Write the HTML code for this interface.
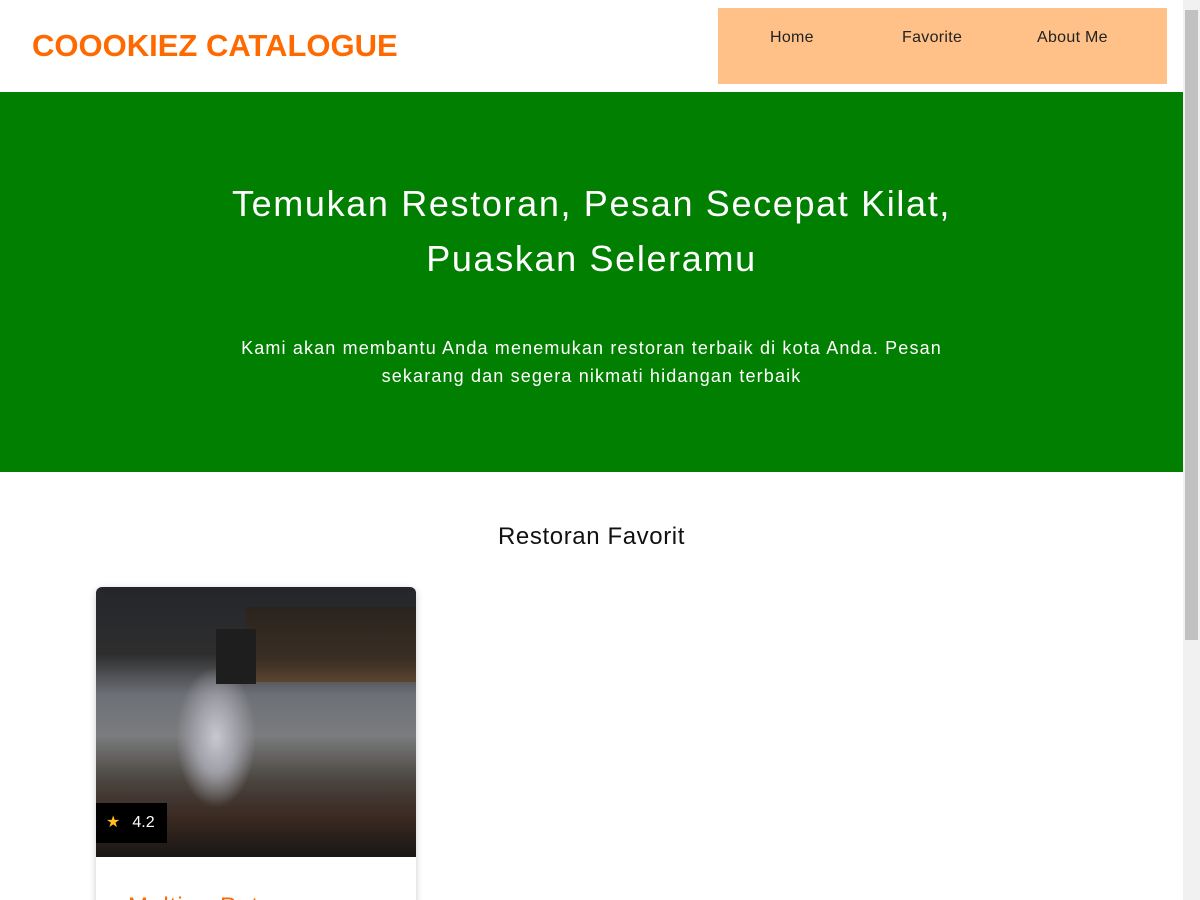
<!DOCTYPE html>
<html><head><meta charset="utf-8"><style>
*{margin:0;padding:0;box-sizing:border-box}
html,body{width:1200px;height:900px;overflow:hidden;background:#fff;font-family:"Liberation Sans",sans-serif}
.page{width:1183px;position:relative;height:900px}
.logo{position:absolute;left:32px;top:28px;color:#ff6a00;font-weight:bold;font-size:31px;letter-spacing:0px}
.nav{position:absolute;left:718px;top:8px;width:449px;height:76px;background:#ffc187}
.nav span{position:absolute;top:21px;font-size:16px;color:#222;letter-spacing:0.3px}
.hero{position:absolute;top:92px;left:0;width:1183px;height:380px;background:#007f00;color:#fff;text-align:center}
.hero h1{font-weight:normal;font-size:36px;line-height:55px;margin-top:84px;letter-spacing:1.65px}
.hero p{font-size:18px;line-height:28px;margin:48px auto 0;width:720px;letter-spacing:1.15px}
.sec{position:absolute;top:523px;width:1183px;text-align:center;font-size:24px;color:#111;letter-spacing:0.6px}
.card{position:absolute;left:96px;top:587px;width:320px;height:330px;border-radius:6px;overflow:hidden;box-shadow:0 2px 8px rgba(0,0,0,.2);background:#fff}
.img{height:270px;position:relative;background:
radial-gradient(ellipse 40px 70px at 120px 150px,#c8c8d0 0%,#a0a0a8 50%,transparent 100%),
linear-gradient(180deg,#24262a 0%,#2e2e2e 25%,#6d7076 40%,#7a7c7e 55%,#4a443e 72%,#3a2a22 85%,#1a1614 100%)}
.shelf{position:absolute;left:150px;top:20px;width:170px;height:75px;background:linear-gradient(180deg,#2a241e,#3a2e24 70%,#5a4430)}
.board{position:absolute;left:120px;top:42px;width:40px;height:55px;background:#1e1e1e}
.rate{position:absolute;left:0;top:216px;width:71px;height:40px;background:#000;color:#fff;font-size:16px;line-height:40px;padding-left:10px}
.rate b{color:#ffc020;font-weight:normal;margin-right:12px}
.title{position:absolute;left:32px;top:306px;color:#ff6a00;font-size:24px;letter-spacing:1px}
.sb{position:absolute;left:1183px;top:0;width:17px;height:900px;background:#f1f1f1}
.th{position:absolute;left:2px;top:10px;width:13px;height:630px;background:#c1c1c1}
</style></head><body><div class="page">
<div class="logo">COOOKIEZ CATALOGUE</div>
<div class="nav"><span style="left:52px">Home</span><span style="left:184px">Favorite</span><span style="left:319px">About Me</span></div>
<div class="hero"><h1>Temukan Restoran, Pesan Secepat Kilat,<br>Puaskan Seleramu</h1>
<p>Kami akan membantu Anda menemukan restoran terbaik di kota Anda. Pesan sekarang dan segera nikmati hidangan terbaik</p></div>
<div class="sec">Restoran Favorit</div>
<div class="card"><div class="img"><div class="shelf"></div><div class="board"></div><div class="rate"><b>★</b>4.2</div></div>
<div class="title">Melting Pot</div></div>
</div>
<div class="sb"><div class="th"></div></div>
</body></html>
